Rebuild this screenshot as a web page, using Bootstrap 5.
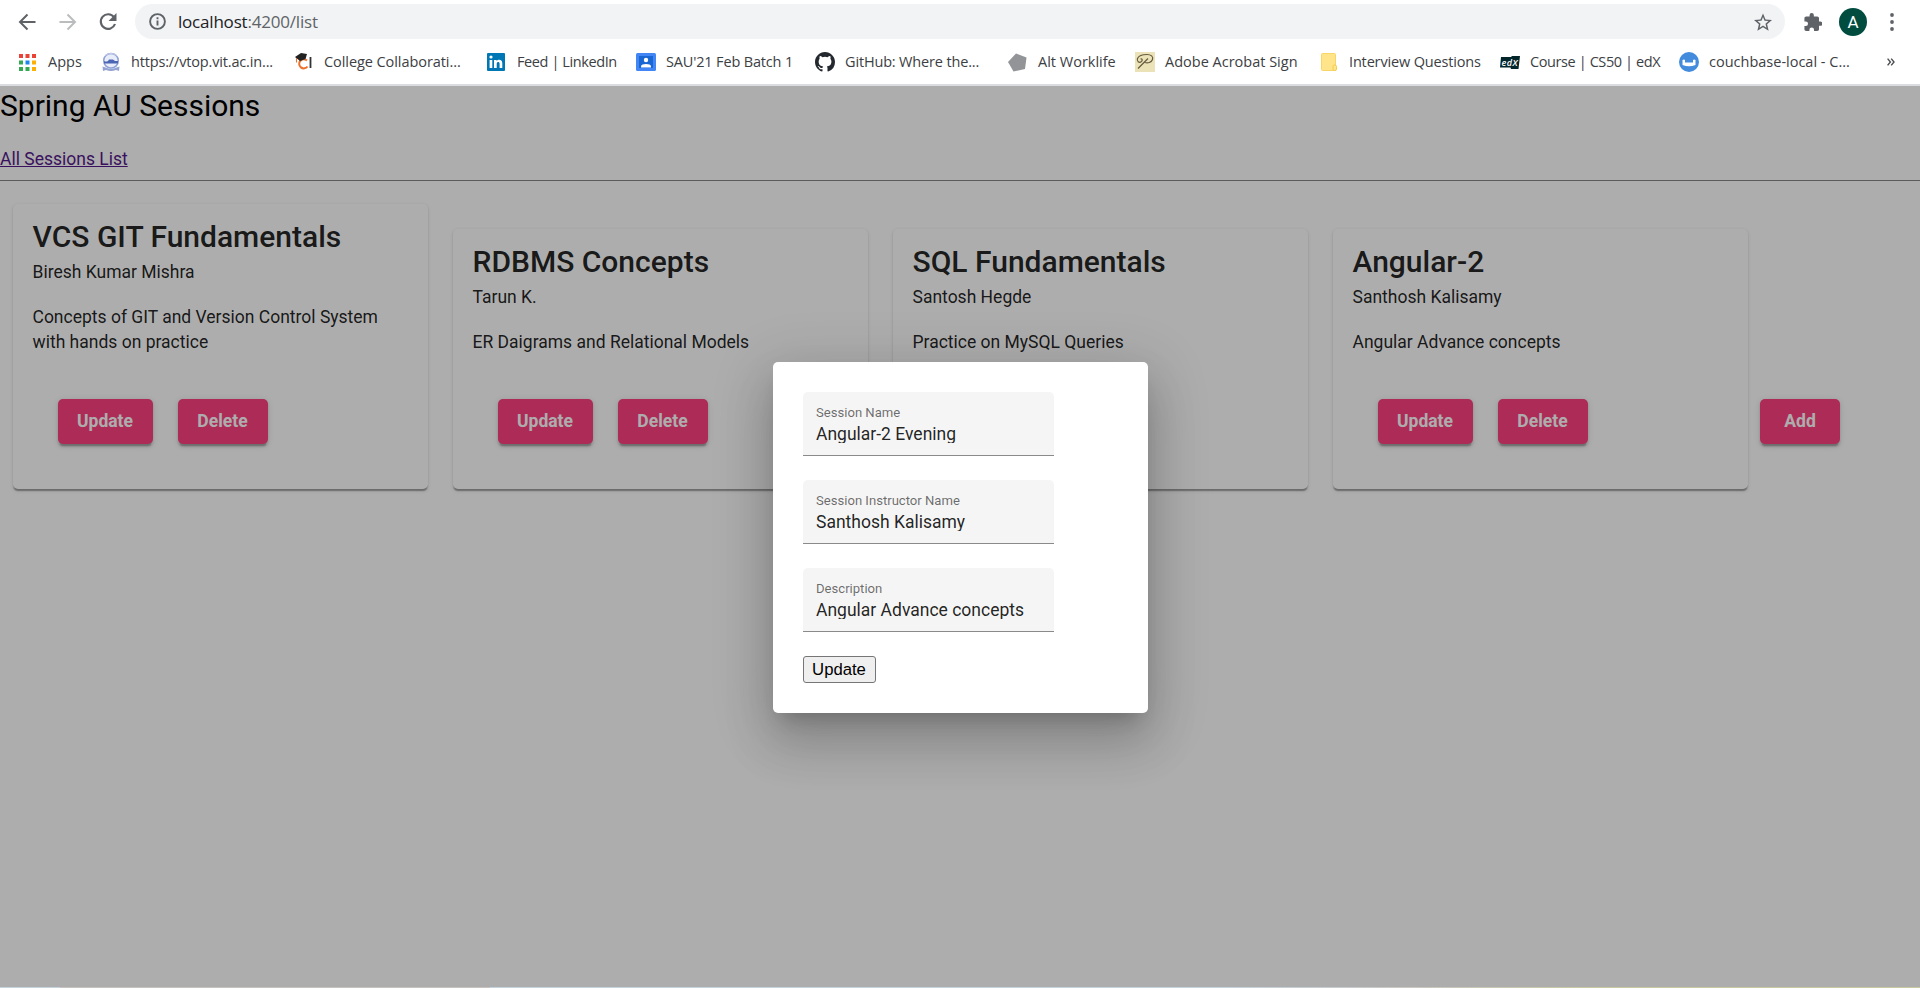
<!DOCTYPE html>
<html lang="en">
<head>
<meta charset="utf-8">
<meta name="viewport" content="width=device-width, initial-scale=1">
<title>Spring AU Sessions</title>
<link rel="stylesheet" href="https://cdn.jsdelivr.net/npm/bootstrap@5.3.0/dist/css/bootstrap.min.css">
<style>
html,body{height:100%;overflow:hidden}
body{font-family:Roboto,sans-serif;font-size:17.5px;line-height:25px;color:#000}
.browser{height:86px;background:#fff;border-bottom:2px solid #dadce0}
.toolbar{height:43px;color:#5f6368}
.ico-back{margin-left:18px}
.ico-fwd{margin-left:23px}
.ico-reload{margin:0 17px 0 21px}
.ico-menu{margin:0 26px 0 23px}
.omnibox{height:35px;background:#f1f3f4;border-radius:18px;margin-right:19px;font:17px/35px "Open Sans",sans-serif;padding:0 13px 0 14px}
.url-text{margin-left:12px;letter-spacing:-.2px;color:#5f6368}
.url-text b{font-weight:400;color:#202124}
.avatar-dot{width:28px;height:28px;margin-left:17px;background:#004d40;color:#fff;font:17px/28px Roboto,sans-serif}
.bookmarks{display:grid;grid-template-columns:82px 193px 193px 149px 179px 193px 127px 186px 179px 179px 208px auto;height:38px;padding-left:19px;font:14.5px/38px "Open Sans",sans-serif;color:#3c4043}
.bm{display:flex;align-items:center;white-space:nowrap}
.bm-icon{width:30px;flex:none;display:flex}
.tight span{letter-spacing:-.16px}
.tighter span{letter-spacing:-.4px}
.viewport-area{height:902px;position:relative;overflow:hidden;background:#fff}
.page-title{font-size:30px;line-height:40px;font-weight:400;margin:0 0 21px}
.home-link{color:#551a8b;text-decoration:underline;text-decoration-thickness:1px}
.rule{border:0;border-top:1px solid #868686;opacity:1;margin:8px 0 10px}
.session{width:415px;margin:12.5px;padding:20px;border-radius:5px;flex:none;color:rgba(0,0,0,.87);box-shadow:0 2.5px 1.25px -1.25px rgba(0,0,0,.2),0 1.25px 1.25px 0 rgba(0,0,0,.14),0 1.25px 3.75px 0 rgba(0,0,0,.12)}
.session h2{font-size:30px;line-height:30px;font-weight:500;margin:-2px 0 8px}
.session p{margin:0 0 20px}
.acts{padding:24px 25px 25px;gap:25px}
.btn-accent{width:95px;height:45px;padding:0;border:0;border-radius:5px;background:#ff4081;color:#fff;font-weight:700;font-size:17.5px;line-height:45px;box-shadow:0 3.75px 1.25px -2.5px rgba(0,0,0,.2),0 2.5px 2.5px 0 rgba(0,0,0,.14),0 1.25px 6.25px 0 rgba(0,0,0,.12)}
.del-btn{width:90px}
.add-btn{width:80px;margin-bottom:57px}
.scrim{position:absolute;inset:0;background:rgba(0,0,0,.32)}
.panel{width:375px;height:351px;margin-top:1px;padding:30px;background:#fff;border-radius:5px;box-shadow:0 13.75px 18.75px -8.75px rgba(0,0,0,.2),0 30px 47.5px 3.75px rgba(0,0,0,.14),0 11.25px 57.5px 10px rgba(0,0,0,.12)}
.field{width:251px;height:64px;margin-bottom:24px;padding:12px 13.5px 0;background:#f5f5f5;border-bottom:1px solid #8a8a8a;border-radius:5px 5px 0 0}
.field label{display:block;font-size:13.1px;line-height:18px;color:rgba(0,0,0,.58)}
.field input{display:block;width:100%;height:20px;margin-top:2px;border:0;padding:0;background:none;font-size:17.5px;line-height:20px;color:rgba(0,0,0,.87);outline:0;clip-path:inset(0 0 1px 0)}
.plain-btn{display:block;width:73px;height:27px;padding:0;border:1px solid #767676;border-radius:3px;background:#efefef;font:16.7px/24px "Liberation Sans",sans-serif;color:#000}
.edge{position:absolute;left:0;right:0;bottom:0;height:1px;background:linear-gradient(90deg,#c5d3dd 60px,#c6c2c0 60px 490px,#c5d3dd 490px 1225px,#c9c8c4 1400px,#c9caa2 1600px,#c9caa2)}
</style>
</head>
<body>
<header class="browser">
  <div class="toolbar d-flex align-items-center">
    <svg class="ico-back" width="18" height="18" viewBox="0 0 18 18" fill="none" stroke="#5f6368" stroke-width="2"><path d="M17.500 9H2.500M9.500 1.500 2 9l7.500 7.500"/></svg>
    <svg class="ico-fwd" width="18" height="18" viewBox="0 0 18 18" fill="none" stroke="#babcbe" stroke-width="2"><path d="M.500 9h15M8.500 1.500 16 9l-7.500 7.500"/></svg>
    <svg class="ico-reload" width="20" height="20" viewBox="0 0 20 20" fill="none" stroke="#5f6368" stroke-width="2.200"><path d="M16 5.200A7.300 7.300 0 1 0 17 12"/><path d="M18.500 1v8h-8z" fill="#5f6368" stroke="none"/></svg>
    <div class="omnibox d-flex align-items-center flex-grow-1">
      <svg width="17" height="17" viewBox="0 0 17 17" fill="none" stroke="#5f6368" stroke-width="1.900"><circle cx="8.500" cy="8.500" r="7.400"/><path d="M8.500 7.500v5M8.500 4.300v2"/></svg>
      <span class="url-text"><b>localhost</b>:4200/list</span>
      <svg class="ms-auto" width="18" height="18" viewBox="0 0 24 24" fill="#5f6368"><path d="M24 9.200l-8.600-.7L12 .5 8.600 8.500 0 9.200l6.500 5.700-2 8.600L12 19l7.500 4.500-2-8.600zM12 16.700l-4.500 2.800 1.200-5.200-4-3.500 5.300-.5L12 5.400l2 4.900 5.300.5-4 3.500 1.200 5.200z"/></svg>
    </div>
    <svg width="18" height="18" viewBox="1.500 1 21 21" fill="#5f6368"><path d="M20.500 11H19V7c0-1.100-.9-2-2-2h-4V3.500a2.500 2.500 0 0 0-5 0V5H4c-1.100 0-2 .9-2 2v3.800h1.500a2.700 2.700 0 0 1 0 5.400H2V20c0 1.100.9 2 2 2h3.800v-1.500a2.700 2.700 0 0 1 5.400 0V22H17c1.100 0 2-.9 2-2v-4h1.500a2.500 2.500 0 0 0 0-5z"/></svg>
    <div class="avatar-dot rounded-circle text-center">A</div>
    <svg class="ico-menu" width="4" height="18" viewBox="0 0 4 18" fill="#5f6368"><circle cx="2" cy="2" r="1.900"/><circle cx="2" cy="9" r="1.900"/><circle cx="2" cy="16" r="1.900"/></svg>
  </div>
  <nav class="bookmarks">
    <div class="bm"><i class="bm-icon"><svg width="17" height="17" viewBox="0 0 17 17"><path fill="#ea4335" d="M0 0h4v4H0zM6.500 0h4v4h-4zM13 0h4v4h-4z"/><path fill="#34a853" d="M0 6.500h4v4H0zM0 13h4v4H0zM6.500 13h4v4h-4z"/><path fill="#1a86f0" d="M6.500 6.500h4v4h-4z"/><path fill="#fbb005" d="M13 6.500h4v4h-4zM13 13h4v4h-4z"/></svg></i><span style="margin-left:-1px">Apps</span></div>
    <div class="bm tight"><i class="bm-icon"><svg width="20" height="20" viewBox="0 0 20 20"><circle cx="10" cy="8.700" r="7.300" fill="#e9edf9" stroke="#8fa0d6" stroke-width="1.500"/><path d="M4 3.500q6-4 12 0" fill="none" stroke="#c4cdec"/><path d="M3 9q2 1.200 4 0l1-1.500h4L14 9h3v2.500H3z" fill="#4a66b4"/><path d="M1.500 14.500l3 1q5.500 2.500 11 0l3-1-.5 4.500-3-1q-5 2-10 0l-3 1z" fill="#93a4d2"/></svg></i><span>https://vtop.vit.ac.in...</span></div>
    <div class="bm"><i class="bm-icon"><svg width="20" height="18" viewBox="0 0 20 18"><path d="M13 7.500a4.600 4.600 0 1 0 .5 6" fill="none" stroke="#ed702d" stroke-width="2"/><path d="M1 4l6-4 6 1-1.500 5-5.500 2z" fill="#222"/><path d="M2.500 5v4.500" stroke="#ed702d"/><path d="M16.500 4v11" stroke="#333" stroke-width="1.800"/></svg></i><span style="letter-spacing:-.07px">College Collaborati...</span></div>
    <div class="bm tighter"><i class="bm-icon"><svg width="18" height="18" viewBox="0 0 18 18"><rect width="18" height="18" rx="1" fill="#0077b5"/><g fill="#fff"><circle cx="4" cy="4" r="1.600"/><path d="M2.600 7h2.700v8H2.600zM7 7h2.600v1c1.500-2 5.700-1.600 5.700 2.200V15h-2.700v-4.300c0-2.200-2.900-2-2.900 0V15H7z"/></g></svg></i><span>Feed | LinkedIn</span></div>
    <div class="bm tight"><i class="bm-icon"><svg width="20" height="18" viewBox="0 0 20 18"><rect width="20" height="18" rx="1.500" fill="#4285f4"/><path fill="#1967d2" d="M3 3h14v12H3z"/><circle cx="10" cy="7" r="2.200" fill="#fff"/><path d="M5 14.500v-1c0-3.200 10-3.200 10 0v1z" fill="#fff"/></svg></i><span>SAU'21 Feb Batch 1</span></div>
    <div class="bm tight"><i class="bm-icon"><svg width="20" height="20" viewBox="0 0 16 16" fill="#24292f"><path d="M8 0C3.580 0 0 3.580 0 8c0 3.540 2.290 6.530 5.470 7.590.4.070.55-.17.55-.38 0-.19-.01-.82-.01-1.490-2.010.37-2.530-.49-2.690-.94-.09-.23-.48-.94-.82-1.130-.28-.15-.68-.52-.01-.53.63-.01 1.080.58 1.230.82.72 1.210 1.870.87 2.330.66.07-.52.28-.87.51-1.070-1.780-.2-3.640-.89-3.640-3.950 0-.87.31-1.590.82-2.150-.08-.2-.36-1.020.08-2.120 0 0 .67-.21 2.200.82a7.600 7.600 0 0 1 4 0c1.530-1.040 2.200-.82 2.200-.82.44 1.100.16 1.920.08 2.120.51.56.82 1.270.82 2.150 0 3.070-1.870 3.750-3.650 3.950.29.25.54.73.54 1.480 0 1.070-.01 1.930-.01 2.200 0 .21.15.46.55.38A8 8 0 0 0 16 8c0-4.420-3.580-8-8-8z"/></svg></i><span>GitHub: Where the...</span></div>
    <div class="bm"><i class="bm-icon"><svg width="20" height="19" viewBox="0 0 20 19"><path d="M8 .5l10.500 4L17 16 5.500 18.500 0 9z" fill="#929497"/></svg></i><span>Alt Worklife</span></div>
    <div class="bm"><i class="bm-icon"><svg width="20" height="20" viewBox="0 0 20 20"><path fill="#ece2b8" d="M0 0h20v20H0z"/><path d="M3 16.500L13 6.500M6.500 9.500C4 11.500 1.500 9 2.500 6.500 4 3 8 2.500 12 2.500c4 0 6.500 2 5.500 5-1 3-5 4-7.500 3M6.500 9.500c1.500-1.500.5-3-1-2.500" fill="none" stroke="#665b3e" stroke-width="1.200"/></svg></i><span>Adobe Acrobat Sign</span></div>
    <div class="bm tight"><i class="bm-icon" style="width:28px"><svg width="16" height="18" viewBox="0 0 16 18"><rect x=".5" y=".5" width="14" height="17" rx="1" fill="#ffe489" stroke="#f8d568"/><rect x="12" y="12" width="3.500" height="5.500" rx="1.500" fill="#ffe489" stroke="#f3cb4f"/></svg></i><span>Interview Questions</span></div>
    <div class="bm tighter"><i class="bm-icon"><svg width="20" height="13" viewBox="0 0 20 13"><path fill="#03262b" d="M1 1h10l1-1h8l-1.500 13H11l-.5-1.500H0z"/><text x="1.500" y="9.500" font-size="9" font-family="Open Sans" fill="#fff" textLength="16" font-weight="600" font-style="italic">edX</text></svg></i><span>Course | CS50 | edX</span></div>
    <div class="bm"><i class="bm-icon"><svg width="20" height="20" viewBox="0 0 20 20"><circle cx="10" cy="10" r="10" fill="#438bdd"/><path d="M3.500 8q1.500-1 2.500 0v2.500h8V8q1-1 2.500 0v5q-6.500 2.500-13 0z" fill="#fff"/></svg></i><span>couchbase-local - C...</span></div>
    <div class="bm"><svg width="8" height="8" viewBox="0 0 8 8" fill="none" stroke="#4a4d51" stroke-width="1.400"><path d="M.6.600 3.400 4 .6 7.400M4.200.600 7 4 4.200 7.400"/></svg></div>
  </nav>
</header>
<main class="viewport-area">
  <h1 class="page-title">Spring AU Sessions</h1>
  <a class="home-link" href="#">All Sessions List</a>
  <hr class="rule">
  <section class="d-flex align-items-end">
    <article class="session"><h2>VCS GIT Fundamentals</h2><p>Biresh Kumar Mishra</p><p>Concepts of GIT and Version Control System with hands on practice</p><div class="acts d-flex"><button class="btn btn-accent">Update</button><button class="btn btn-accent del-btn">Delete</button></div></article>
    <article class="session"><h2>RDBMS Concepts</h2><p>Tarun K.</p><p>ER Daigrams and Relational Models</p><div class="acts d-flex"><button class="btn btn-accent">Update</button><button class="btn btn-accent del-btn">Delete</button></div></article>
    <article class="session"><h2>SQL Fundamentals</h2><p>Santosh Hegde</p><p>Practice on MySQL Queries</p><div class="acts d-flex"><button class="btn btn-accent">Update</button></div></article>
    <article class="session"><h2>Angular-2</h2><p>Santhosh Kalisamy</p><p>Angular Advance concepts</p><div class="acts d-flex"><button class="btn btn-accent">Update</button><button class="btn btn-accent del-btn">Delete</button></div></article>
    <button class="btn btn-accent add-btn">Add</button>
  </section>
  <div class="scrim d-flex align-items-center justify-content-center">
    <form class="panel">
      <div class="field"><label>Session Name</label><input value="Angular-2 Evening"></div>
      <div class="field"><label>Session Instructor Name</label><input value="Santhosh Kalisamy"></div>
      <div class="field"><label>Description</label><input value="Angular Advance concepts"></div>
      <button type="button" class="plain-btn">Update</button>
    </form>
  </div>
  <div class="edge"></div>
</main>
<script src="https://cdn.jsdelivr.net/npm/bootstrap@5.3.0/dist/js/bootstrap.bundle.min.js"></script>
</body>
</html>
